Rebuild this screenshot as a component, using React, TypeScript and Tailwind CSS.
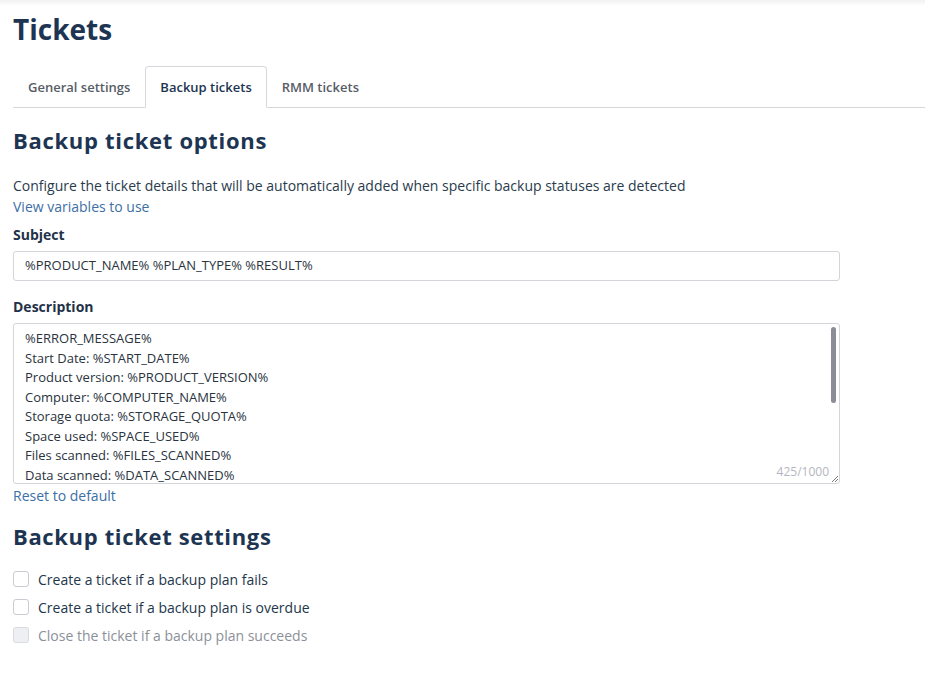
import React from 'react';

const descriptionLines = [
  '%ERROR_MESSAGE%',
  'Start Date: %START_DATE%',
  'Product version: %PRODUCT_VERSION%',
  'Computer: %COMPUTER_NAME%',
  'Storage quota: %STORAGE_QUOTA%',
  'Space used: %SPACE_USED%',
  'Files scanned: %FILES_SCANNED%',
  'Data scanned: %DATA_SCANNED%',
];

const tabs = [
  { label: 'General settings', active: false },
  { label: 'Backup tickets', active: true },
  { label: 'RMM tickets', active: false },
];

interface CheckRowProps {
  label: string;
  disabled?: boolean;
}

const CheckRow: React.FC<CheckRowProps> = ({ label, disabled = false }) => (
  <label className="flex items-center h-[28px] gap-[9px]">
    <span
      className={`w-[16px] h-[16px] rounded-[3px] border ${
        disabled ? 'bg-[#eeeff2] border-[#d9dbe0]' : 'bg-white border-[#c9ccd2]'
      }`}
    />
    <span className={`text-[14px] ${disabled ? 'text-[#8b9099]' : 'text-[#23364a]'}`}>{label}</span>
  </label>
);

const App: React.FC = () => {
  return (
    <div className="min-h-[687px] bg-white font-['Open_Sans',sans-serif]">
      <div className="h-[6px] bg-gradient-to-b from-[#f1f1f1] to-white" />

      <div className="pl-[13px]">
        <h1 className="mt-[4px] text-[28px] leading-[38px] font-bold text-[#1d3552]">Tickets</h1>

        {/* tabs */}
        <div className="mt-[18px] flex border-b border-[#d6d8dc]">
          {tabs.map((t) => (
            <div
              key={t.label}
              className={`h-[42px] px-[14px] pt-[1px] flex items-center text-[13px] font-semibold -mb-px ${
                t.active
                  ? 'border border-b-white border-[#d6d8dc] rounded-t-[4px] bg-white text-[#1d3552]'
                  : 'border border-transparent text-[#575d66]'
              }`}
            >
              {t.label}
            </div>
          ))}
        </div>

        <h2 className="mt-[17px] text-[22px] leading-[30px] font-bold tracking-[0.7px] text-[#1d3552]">
          Backup ticket options
        </h2>

        <p className="mt-[20px] text-[14px] leading-[21px] text-[#2a3b4d]">
          Configure the ticket details that will be automatically added when specific backup statuses are detected
        </p>
        <a className="block text-[14px] leading-[21px] text-[#3d6fa5]">View variables to use</a>

        <div className="mt-[7px] text-[14px] leading-[21px] font-bold text-[#1f3249]">Subject</div>
        <div className="mt-[6px] w-[827px] h-[30px] border border-[#d3d5da] rounded-[3px] flex items-center px-[11px] text-[13px] text-[#2a3340]">
          %PRODUCT_NAME% %PLAN_TYPE% %RESULT%
        </div>

        <div className="mt-[15px] text-[14px] leading-[21px] font-bold text-[#1f3249]">Description</div>
        <div className="relative mt-[6px] w-[827px] h-[161px] border border-[#d3d5da] rounded-[3px] overflow-hidden">
          <div className="pt-[5px] pl-[11px] text-[13px] leading-[19.5px] text-[#2a3340]">
            {descriptionLines.map((l) => (
              <div key={l}>{l}</div>
            ))}
          </div>
          {/* scrollbar thumb */}
          <div className="absolute right-[3px] top-[3px] w-[5px] h-[76px] rounded-full bg-[#8b8e96]" />
          {/* char counter */}
          <div className="absolute right-[10px] bottom-[3px] text-[12px] leading-[16px] text-[#b3b6be] bg-white">
            425/1000
          </div>
          {/* resize grip */}
          <svg className="absolute right-0 bottom-0" width="10" height="10" viewBox="0 0 10 10">
            <path d="M9 3 L3 9 M9 6 L6 9" stroke="#777" strokeWidth="1" />
          </svg>
        </div>
        <a className="block mt-[1px] text-[14px] leading-[21px] text-[#3d6fa5]">Reset to default</a>

        <h2 className="mt-[15px] text-[22px] leading-[30px] font-bold tracking-[0.65px] text-[#1d3552]">
          Backup ticket settings
        </h2>

        <div className="mt-[14px] flex flex-col">
          <CheckRow label="Create a ticket if a backup plan fails" />
          <CheckRow label="Create a ticket if a backup plan is overdue" />
          <CheckRow label="Close the ticket if a backup plan succeeds" disabled />
        </div>
      </div>
    </div>
  );
};

export default App;
